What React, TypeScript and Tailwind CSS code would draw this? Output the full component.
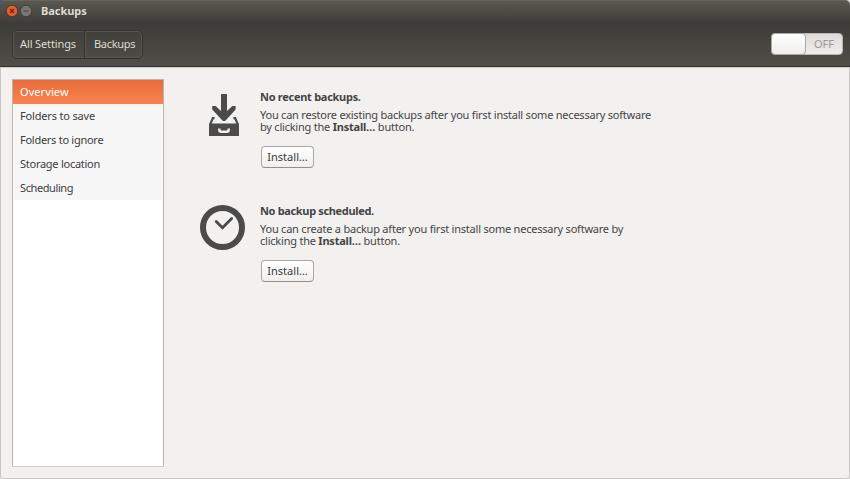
import React from 'react';

const navItems = [
  { label: 'Overview', style: 'h-6 bg-linear-to-b from-[#e86c3a] to-[#f88350] text-white tracking-[0.08px]' },
  { label: 'Folders to save', style: 'h-6 bg-[#f7f7f7] tracking-[-0.17px]' },
  { label: 'Folders to ignore', style: 'h-6 bg-[#f7f7f7] tracking-[-0.27px]' },
  { label: 'Storage location', style: 'h-6 bg-[#f7f7f7] tracking-[-0.26px]' },
  { label: 'Scheduling', style: 'h-6 bg-[#f7f7f7] tracking-[-0.4px]' },
];

function InstallButton() {
  return (
    <button className="mt-[13px] ml-px flex h-[22px] w-[53px] items-center justify-center rounded-[4px] border border-[#aaa8a5] border-b-[#92908d] bg-linear-to-b from-white to-[#f0efee] pb-px tracking-[0.02px] whitespace-nowrap text-[#3c3c3c]">
      Install…
    </button>
  );
}

function BackupIcon() {
  return (
    <svg width="30" height="43" viewBox="0 0 30 43" fill="none">
      <path d="M12 0h6v17l5.4-5h3.2v3.6L16.6 26.4q-1.6 1.4-3.2 0L3.2 15.6V12h3.4l5.4 5z" fill="#4b4b4b" />
      <path d="M5.6 24.2H3.8L1.4 30M24.4 24.2h1.8l2.4 5.8" stroke="#4b4b4b" strokeWidth="2.2" />
      <path d="M0 29.6h30V42H0z" fill="#4b4b4b" />
      <path d="M10.3 34.4v1.4q0 2 2 2h5.4q2 0 2-2v-1.4" stroke="#f2f1f0" strokeWidth="2.4" />
    </svg>
  );
}

function ClockIcon() {
  return (
    <svg width="46" height="46" viewBox="0 0 46 46" fill="none" stroke="#4b4b4b">
      <circle cx="22.5" cy="22.5" r="19.5" strokeWidth="6" />
      <path d="M16.2 16.5l6.3 6.3 9.2-9.3" strokeWidth="2.8" strokeLinecap="round" />
    </svg>
  );
}

export default function App() {
  return (
    <div className="h-[479px] w-[850px] overflow-hidden bg-[linear-gradient(135deg,#3b5998_8px,#dcdad8_8px)] font-['Noto_Sans',sans-serif] text-[11px] leading-3 text-[#3c3c3c]">
      <div className="flex h-full flex-col overflow-hidden rounded-[5px]">
        <header className="flex h-[22px] shrink-0 items-center border-t border-[#66645c] bg-linear-to-b from-[#59584f] to-[#3f3e39] pb-px pl-[6px]">
          <svg width="28" height="14" viewBox="0 0 28 14" fill="none">
            <circle cx="6" cy="7" r="5.7" fill="#ec5b2b" stroke="#38372f" strokeWidth=".8" />
            <path d="M4 5l4 4M8 5l-4 4" stroke="#51301f" strokeWidth="1.3" />
            <circle cx="20" cy="7" r="5.7" fill="#777670" stroke="#38372f" strokeWidth=".8" />
            <path d="M17.5 7h5" stroke="#55544f" strokeWidth="1.3" />
          </svg>
          <h1 className="ml-[7px] font-bold tracking-[-0.05px] text-[#dfdbd2]">Backups</h1>
        </header>
        <div className="flex h-[45px] shrink-0 items-start justify-between border-b border-[#32312d] bg-linear-to-b from-[#3c3b37] to-[#504f47] pt-[8px] pr-[7px] pl-[12px]">
          <div className="flex h-[29px] w-[131px] rounded-[5px] border border-[#33322e] text-[#dfdbd2]">
            <button className="flex w-[72px] items-center rounded-l-[4px] border border-r-0 border-[#55544d] pb-[2px] pl-[6px] tracking-[-0.12px] whitespace-nowrap">All Settings</button>
            <button className="flex flex-1 items-center rounded-r-[4px] border border-[#55544d] pb-[2px] pl-[8px] tracking-[-0.3px] shadow-[-1px_0_0_#33322e] whitespace-nowrap">Backups</button>
          </div>
          <div className="mt-[3px] flex h-[22px] w-[72px] rounded-[4px] border border-[#b8b6b3] bg-linear-to-b from-[#dedcda] to-[#efeeed]">
            <div className="-my-px -ml-px w-[35px] rounded-[4px] border border-[#a9a7a4] bg-linear-to-b from-white to-[#eeedec]" />
            <span className="flex flex-1 items-center justify-center text-[#9a9895]">OFF</span>
          </div>
        </div>
        <main className="flex min-h-0 flex-1 rounded-b-[4px] border border-[#c9c5c1] border-t-[#d4d1ce] bg-[#f2f1f0] pt-[11px] pb-[11px] pl-[11px]">
          <nav className="h-[388px] w-[152px] shrink-0 border border-[#b9b5b0] border-b-[#d0cdca] bg-white">
            {navItems.map((item) => (
              <div key={item.label} className={'flex items-center px-[7px] whitespace-nowrap ' + item.style}>{item.label}</div>
            ))}
          </nav>
          <div className="flex flex-col pl-[36px] text-[#444]">
            <section className="flex h-[114px]">
              <div className="w-[60px] pt-[15px] pl-[9px]"><BackupIcon /></div>
              <div className="pt-[12px]">
                <h2 className="font-bold tracking-[-0.28px] whitespace-nowrap">No recent backups.</h2>
                <p className="mt-[6px] tracking-[-0.22px] whitespace-nowrap">You can restore existing backups after you first install some necessary software<br />by clicking the <b>Install…</b> button.</p>
                <InstallButton />
              </div>
            </section>
            <section className="flex">
              <div className="w-[60px] pt-[12px]"><ClockIcon /></div>
              <div className="pt-[12px]">
                <h2 className="font-bold tracking-[-0.34px] whitespace-nowrap">No backup scheduled.</h2>
                <p className="mt-[6px] tracking-[-0.22px] whitespace-nowrap">You can create a backup after you first install some necessary software by<br />clicking the <b>Install…</b> button.</p>
                <InstallButton />
              </div>
            </section>
          </div>
        </main>
      </div>
    </div>
  );
}
